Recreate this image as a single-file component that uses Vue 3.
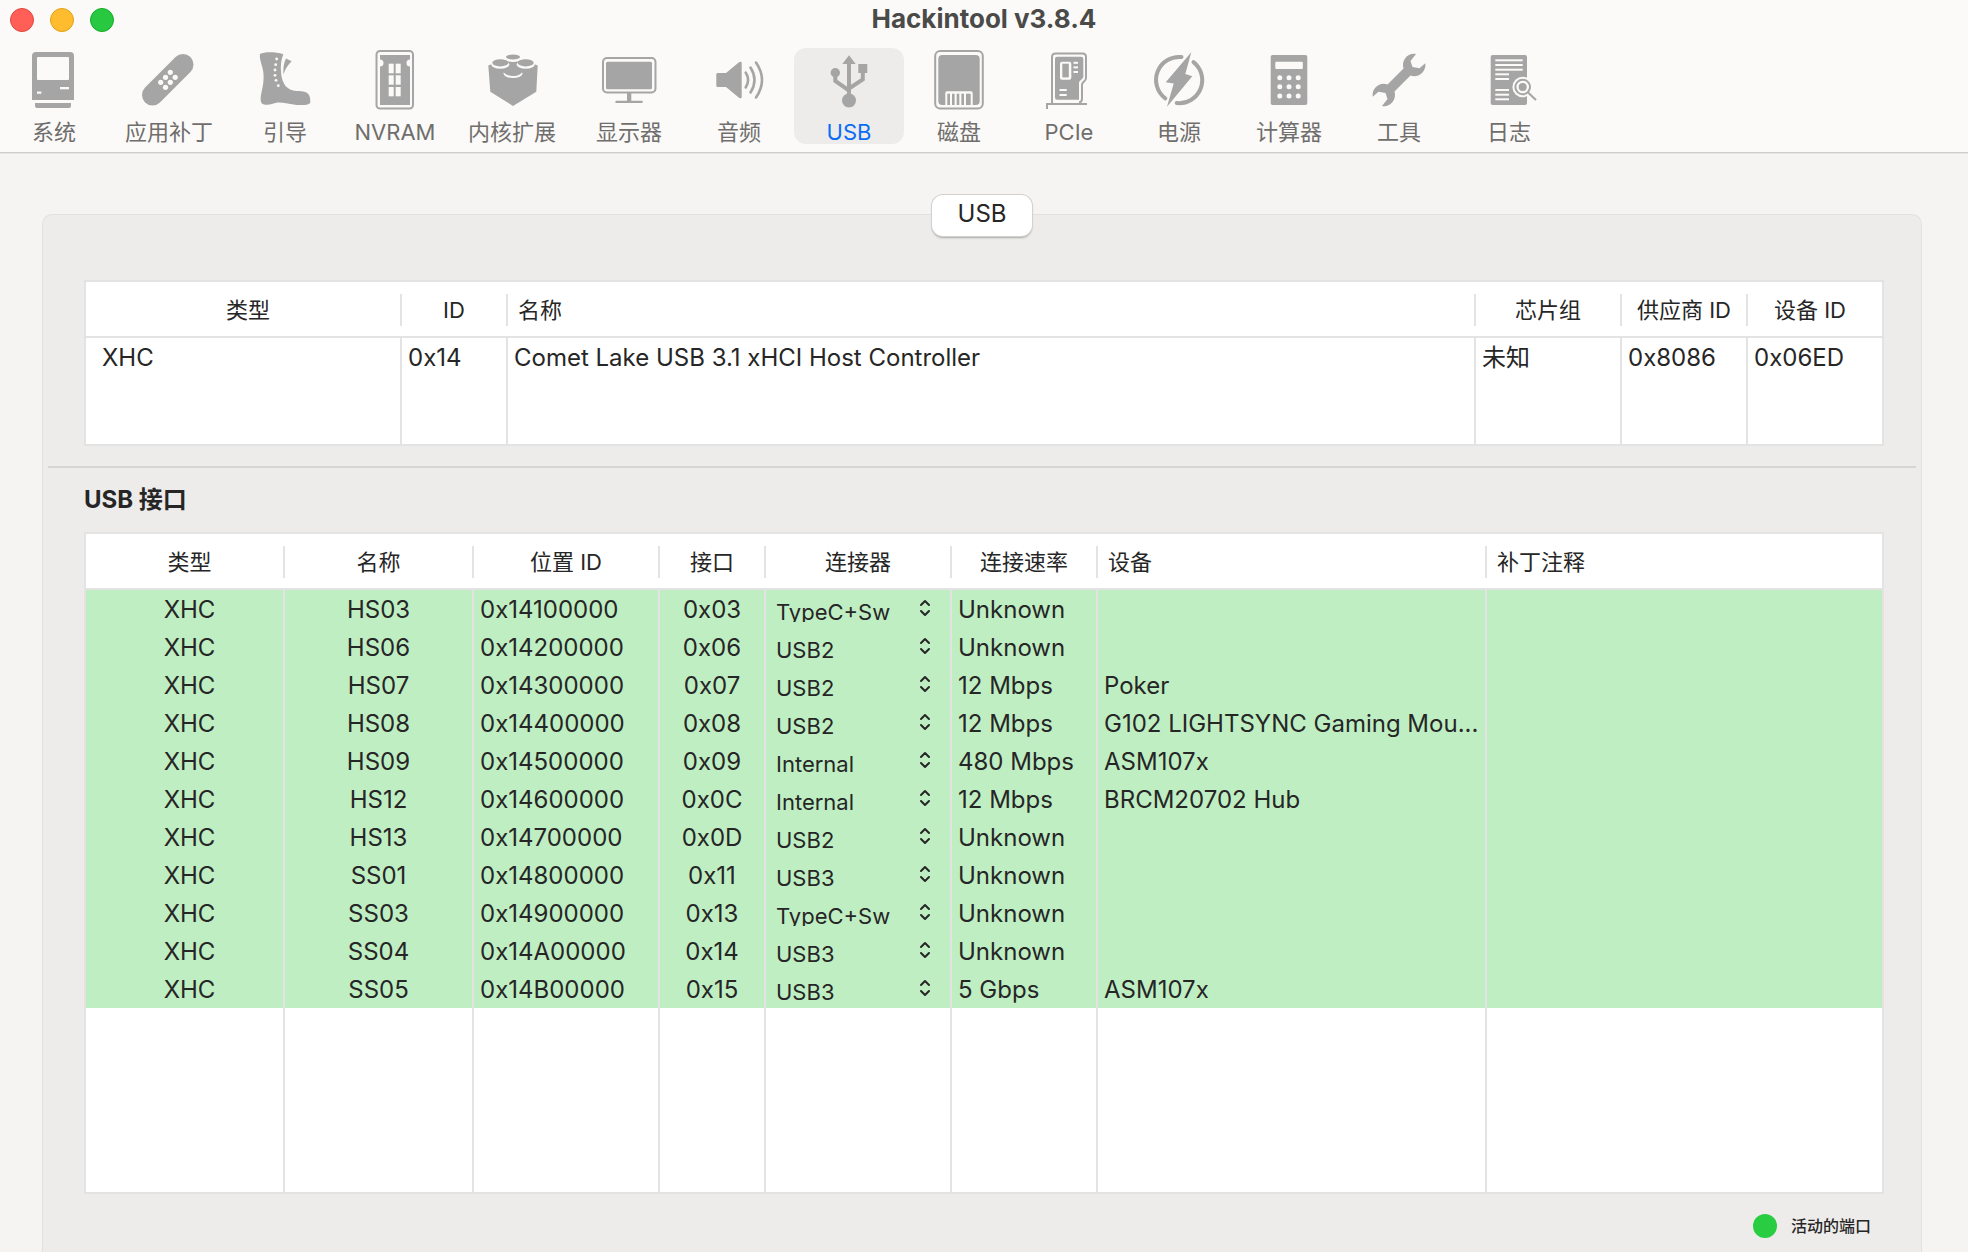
<script setup>
import { reactive, ref } from 'vue'

const active = ref('USB')

const tools = [
  {
    label: '系统',
    icon: `<path d="M12 2h34a4 4 0 0 1 4 4v44H8V6a4 4 0 0 1 4-4z"/><path d="M11 53h36v3a2 2 0 0 1-2 2H13a2 2 0 0 1-2-2z"/><rect class="cut" x="13" y="7" width="32" height="23" rx="1"/><rect class="cut" x="36" y="37" width="9" height="2.3"/><rect class="cut" x="13" y="41.5" width="4.3" height="2.3"/>`
  },
  {
    label: '应用补丁',
    icon: `<path class="line" d="M13.5 45 44 14.5" stroke-width="21" stroke-linecap="round"/><g class="cut"><circle cx="31.3" cy="22.3" r="2.6"/><circle cx="26.5" cy="27.3" r="2.6"/><circle cx="36.2" cy="27.3" r="2.6"/><circle cx="21.7" cy="32.3" r="2.6"/><circle cx="31.3" cy="32.3" r="2.6"/><circle cx="26.5" cy="37.3" r="2.6"/></g>`
  },
  {
    label: '引导',
    icon: `<path d="M5 4C9 2 20 1.500 28.300 4.300C26 10 25.500 16 26 21.700C26.500 29 28.500 35 33.300 38.300C38 42 46 40.500 50 42C54 43.500 55.500 46 55.300 52.700C53 55.500 46 55 41.700 55C35 54.500 27 52 21.700 52.700C18 53.500 14 55.500 9 54.500C5.500 54 5 50 6.300 43.300C8 36 9 30 8.500 24C8 16 4 10 5 4z"/><path d="M31 8.500 36.700 11.300C33 15 30 19 28.500 24.500C28 19 28.500 13 31 8.500z"/><g class="cut"><circle cx="21.700" cy="9" r="1.400"/><circle cx="20.700" cy="14.700" r="1.400"/><circle cx="20" cy="20" r="1.400"/><circle cx="20" cy="25.300" r="1.400"/><circle cx="21" cy="30.300" r="1.400"/><circle cx="23.300" cy="35.700" r="1.400"/></g>`
  },
  {
    label: 'NVRAM',
    icon: `<rect class="line" x="11.500" y="1" width="36.500" height="57.500" rx="3.500" stroke-width="2"/><path d="M15 5H45V9.500A3.500 3.500 0 0 0 45 16.500V55H15V16.500A3.500 3.500 0 0 0 15 9.500z"/><g class="cut"><rect x="23.700" y="13.700" width="5" height="9.600"/><rect x="30.700" y="13.700" width="5" height="9.600"/><rect x="23.700" y="25.300" width="5" height="9.400"/><rect x="30.700" y="25.300" width="5" height="9.400"/><rect x="23.700" y="37" width="5" height="9.300"/><rect x="30.700" y="37" width="5" height="9.300"/></g>`
  },
  {
    label: '内核扩展',
    icon: `<path d="M6.300 15.500 14 12.500 31 8 48 12.500 55.700 15.500 54.300 41.700 31 56 8.300 41.700z"/><g class="cut"><ellipse cx="31" cy="8.500" rx="8.500" ry="3.400"/><ellipse cx="18.300" cy="14.500" rx="9" ry="4.300"/><ellipse cx="43.700" cy="14.500" rx="9" ry="4.300"/><ellipse cx="31" cy="23.500" rx="9.500" ry="4.500"/></g><ellipse cx="31" cy="7" rx="7" ry="2.500"/><ellipse cx="18.300" cy="12.800" rx="8" ry="3.600"/><ellipse cx="43.700" cy="12.800" rx="8" ry="3.600"/><path d="M21 19h20v1.500C40 24 36 26 31 26s-9-2-10-5.500z"/>`
  },
  {
    label: '显示器',
    icon: `<rect class="line" x="4" y="8" width="52.500" height="34.500" rx="4" stroke-width="2"/><rect x="7" y="11.700" width="46" height="27.600" rx="1.500"/><rect x="28" y="43" width="4.300" height="8"/><rect x="16.300" y="50.700" width="27.500" height="2.300" rx="1"/>`
  },
  {
    label: '音频',
    icon: `<path d="M8.500 23H17L30 12.300Q32.700 11 32.700 13V47Q32.700 49 30 47.700L17 37H8.500Q7.300 37 7.300 35.500V24.500Q7.300 23 8.500 23z"/><g class="line" stroke-width="2.600" stroke-linecap="round"><path d="M36.700 22.500Q41.500 30 36.700 37.500"/><path d="M41.500 17.500Q49.500 30 41.500 42.500"/><path d="M47 12.500Q59 30 47 47.500"/></g>`
  },
  {
    label: 'USB',
    icon: `<path d="M30 5.300 36.700 14H23.300z"/><circle cx="30" cy="50.500" r="7"/><circle cx="16.300" cy="22.700" r="4.700"/><rect x="39.300" y="14" width="9" height="9"/><g class="line" stroke-width="4"><path d="M30 12V46"/><path d="M16.300 23V31L30 40.500"/><path d="M43.800 22V29.500L30 38.500"/></g>`
  },
  {
    label: '磁盘',
    icon: `<rect class="line" x="6.200" y="1" width="47.600" height="57.500" rx="5" stroke-width="2"/><rect x="9.300" y="5" width="41.400" height="50" rx="4"/><path class="cut" d="M16.300 55V43Q16.300 41.300 18 41.300H42Q43.700 41.300 43.700 43V55z"/><rect x="18.300" y="43.700" width="2.700" height="11.300"/><rect x="23" y="43.700" width="2.600" height="11.300"/><rect x="27.700" y="43.700" width="2.600" height="11.300"/><rect x="32.400" y="43.700" width="2.600" height="11.300"/><rect x="37" y="43.700" width="4.700" height="11.300"/>`
  },
  {
    label: 'PCIe',
    icon: `<path class="line" stroke-width="2" d="M13 53V7Q13 3.500 16.500 3.500H43.500Q47 3.500 47 7V28Q47 30 45 31.500L44 32.500Q43 33.300 43 35V49Q43 52 40 52.500"/><path d="M18 6.700H42Q44.300 6.700 44.300 9V27.500L42 30Q40 31 40 33V49.700H18Q16 49.700 16 47.500V9Q16 6.700 18 6.700z"/><rect class="cut" x="21" y="11.700" width="11.300" height="18" rx="2"/><rect x="23.300" y="13.700" width="6.500" height="13.700"/><g class="cut"><rect x="34.500" y="11.800" width="4.500" height="2"/><rect x="34.500" y="16.400" width="4.500" height="2"/><rect x="34.500" y="21" width="4.500" height="2"/><rect x="20.500" y="39" width="7.200" height="2"/><rect x="20.500" y="44" width="7.200" height="2"/></g><path class="line" stroke-width="2" d="M48 54H8V59"/>`
  },
  {
    label: '电源',
    icon: `<g class="line" stroke-width="4" stroke-linecap="round"><path d="M32.500 7.100A23 23 0 0 0 16.300 48.400"/><path d="M44.500 12.100A23 23 0 0 1 27.700 53"/></g><path d="M42.300 2.300 36.300 24 43.300 26.300 18 56.700 24.700 33.500 16.700 32.300z"/>`
  },
  {
    label: '计算器',
    icon: `<rect x="11.700" y="5" width="36.600" height="50" rx="2"/><g class="cut"><rect x="16.300" y="11.700" width="27.500" height="7.300" rx="1"/><circle cx="20.800" cy="27.700" r="2.500"/><circle cx="30" cy="27.700" r="2.500"/><circle cx="39.200" cy="27.700" r="2.500"/><circle cx="20.800" cy="36.800" r="2.500"/><circle cx="30" cy="36.800" r="2.500"/><circle cx="39.200" cy="36.800" r="2.500"/><circle cx="20.800" cy="46" r="2.500"/><circle cx="30" cy="46" r="2.500"/><circle cx="39.200" cy="46" r="2.500"/></g>`
  },
  {
    label: '工具',
    icon: `<path d="M47 4C39 2.500 32 10 34.500 18.500L18.500 34.500C11 31.500 2.500 38 3.700 46.700L9.500 41.700 16.500 43 18.500 49 13 56C21 57.500 28 50 25.500 41.500L41.500 25.500C49 28.500 57.500 22 56.300 13.300L50.500 18.300 43.500 17 41.500 11z"/>`
  },
  {
    label: '日志',
    icon: `<rect x="11.700" y="5" width="36.300" height="50" rx="2"/><g class="cut"><rect x="16.300" y="9.300" width="27.400" height="2"/><rect x="16.300" y="14" width="27.400" height="2"/><rect x="16.300" y="18.700" width="27.400" height="2"/><rect x="16.300" y="23.300" width="13.700" height="2"/><rect x="16.300" y="28" width="13.700" height="2"/><rect x="16.300" y="39" width="13.700" height="2"/><rect x="16.300" y="43.700" width="13.700" height="2"/><rect x="16.300" y="48.300" width="13.700" height="2"/><circle cx="43.700" cy="37" r="10.300"/></g><path class="gap" d="M48 41 56.500 49.500"/><g class="line" stroke-width="2"><circle cx="43.700" cy="37" r="7.300"/><path d="M48.800 42.200 57 50"/></g><circle cx="43.700" cy="37" r="4"/>`
  }
]

const connectors = ['USB2', 'USB3', 'TypeC+Sw', 'TypeC', 'Internal']

const ports = reactive([
  { name: 'HS03', location: '0x14100000', port: '0x03', connector: 'TypeC+Sw', speed: 'Unknown', device: '' },
  { name: 'HS06', location: '0x14200000', port: '0x06', connector: 'USB2', speed: 'Unknown', device: '' },
  { name: 'HS07', location: '0x14300000', port: '0x07', connector: 'USB2', speed: '12 Mbps', device: 'Poker' },
  { name: 'HS08', location: '0x14400000', port: '0x08', connector: 'USB2', speed: '12 Mbps', device: 'G102 LIGHTSYNC Gaming Mou...' },
  { name: 'HS09', location: '0x14500000', port: '0x09', connector: 'Internal', speed: '480 Mbps', device: 'ASM107x' },
  { name: 'HS12', location: '0x14600000', port: '0x0C', connector: 'Internal', speed: '12 Mbps', device: 'BRCM20702 Hub' },
  { name: 'HS13', location: '0x14700000', port: '0x0D', connector: 'USB2', speed: 'Unknown', device: '' },
  { name: 'SS01', location: '0x14800000', port: '0x11', connector: 'USB3', speed: 'Unknown', device: '' },
  { name: 'SS03', location: '0x14900000', port: '0x13', connector: 'TypeC+Sw', speed: 'Unknown', device: '' },
  { name: 'SS04', location: '0x14A00000', port: '0x14', connector: 'USB3', speed: 'Unknown', device: '' },
  { name: 'SS05', location: '0x14B00000', port: '0x15', connector: 'USB3', speed: '5 Gbps', device: 'ASM107x' }
])
</script>

<template>
  <div class="window">
    <header class="chrome">
      <div class="titlebar">
        <div class="lights">
          <button class="light close" aria-label="关闭"></button>
          <button class="light minimize" aria-label="最小化"></button>
          <button class="light zoom" aria-label="缩放"></button>
        </div>
        <h1>Hackintool v3.8.4</h1>
      </div>
      <nav class="toolbar">
        <button
          v-for="tool in tools"
          :key="tool.label"
          class="tool"
          :class="{ active: tool.label === active }"
          @click="active = tool.label"
        >
          <svg viewBox="0 0 60 60" aria-hidden="true" v-html="tool.icon"></svg>
          <span>{{ tool.label }}</span>
        </button>
      </nav>
    </header>

    <main class="content">
      <button class="tab">USB</button>
      <section class="panel">
        <table class="grid controllers">
          <colgroup>
            <col class="c-type" /><col class="c-id" /><col /><col class="c-chip" /><col class="c-vendor" /><col class="c-dev" />
          </colgroup>
          <thead>
            <tr>
              <th>类型</th><th>ID</th><th class="start">名称</th><th>芯片组</th><th>供应商 ID</th><th>设备 ID</th>
            </tr>
          </thead>
          <tbody>
            <tr>
              <td>XHC</td><td>0x14</td><td>Comet Lake USB 3.1 xHCI Host Controller</td><td>未知</td><td>0x8086</td><td>0x06ED</td>
            </tr>
            <tr class="filler"><td v-for="n in 6" :key="n"></td></tr>
          </tbody>
        </table>

        <hr />

        <h2>USB 接口</h2>

        <table class="grid ports">
          <colgroup>
            <col class="p-type" /><col class="p-name" /><col class="p-loc" /><col class="p-port" /><col class="p-conn" /><col class="p-speed" /><col class="p-device" /><col />
          </colgroup>
          <thead>
            <tr>
              <th>类型</th><th>名称</th><th>位置 ID</th><th>接口</th><th>连接器</th><th>连接速率</th><th class="start">设备</th><th class="start">补丁注释</th>
            </tr>
          </thead>
          <tbody>
            <tr v-for="p in ports" :key="p.name" class="live">
              <td class="center">XHC</td>
              <td class="center">{{ p.name }}</td>
              <td>{{ p.location }}</td>
              <td class="center">{{ p.port }}</td>
              <td class="popup-cell">
                <div class="popup">
                  <select v-model="p.connector" :aria-label="p.name + ' 连接器'">
                    <option v-for="c in connectors" :key="c">{{ c }}</option>
                  </select>
                  <svg viewBox="0 0 12 18" aria-hidden="true"><path d="M2 6 6 2 10 6M2 12 6 16 10 12" /></svg>
                </div>
              </td>
              <td>{{ p.speed }}</td>
              <td>{{ p.device }}</td>
              <td></td>
            </tr>
            <tr class="filler"><td v-for="n in 8" :key="n"></td></tr>
          </tbody>
        </table>

        <footer class="legend"><i class="dot"></i><span>活动的端口</span></footer>
      </section>
    </main>
  </div>
</template>

<style>
body {
  margin: 0;
}
</style>

<style scoped>
.window {
  display: flex;
  flex-direction: column;
  min-height: 100vh;
  background: #f5f4f2;
  color: #262626;
  font-family: Inter, "Noto Sans CJK SC", sans-serif;
  font-size: 24px;
}
button,
select {
  margin: 0;
  padding: 0;
  border: 0;
  background: none;
  color: inherit;
  font: inherit;
}
.chrome {
  padding-bottom: 8px;
  background: #fbfaf8;
  border-bottom: 1px solid #cdcccb;
  box-shadow: 0 1px #e6e5e3;
}
.titlebar {
  display: grid;
  grid-template-columns: 1fr auto 1fr;
  height: 48px;
}
.lights {
  display: flex;
  gap: 16px;
  padding: 8px 10px;
}
.light {
  width: 24px;
  height: 24px;
  border-radius: 50%;
}
.close {
  background: #ff5f57;
  border: 1px solid #e2463f;
}
.minimize {
  background: #febc2e;
  border: 1px solid #e1a116;
}
.zoom {
  background: #28c840;
  border: 1px solid #12ac28;
}
h1 {
  margin: 0;
  font-size: 26px;
  font-weight: 700;
  line-height: 38px;
  color: #4a4a49;
}
.toolbar {
  display: grid;
  grid-template-columns: 108px 122px 110px 110px 124px repeat(9, 110px);
}
.tool {
  display: flex;
  flex-direction: column;
  align-items: center;
  gap: 10px;
  height: 96px;
  padding-top: 2px;
  border-radius: 12px;
  color: #6f6e6d;
  font-size: 22px;
  line-height: 24px;
  white-space: nowrap;
  --face: #fbfaf8;
}
.tool.active {
  --face: #edecea;
  background: #edecea;
  color: #0a6cf5;
}
.tool svg {
  flex: none;
  width: 60px;
  height: 60px;
  fill: #a5a5a5;
}
.tool :deep(.cut) {
  fill: var(--face);
}
.tool :deep(.line) {
  fill: none;
  stroke: #a5a5a5;
}
.tool :deep(.gap) {
  fill: none;
  stroke: var(--face);
  stroke-width: 5px;
}
.content {
  display: flex;
  flex: 1;
  flex-direction: column;
  padding: 42px 46px 0 42px;
}
.tab {
  z-index: 1;
  align-self: center;
  width: 100px;
  height: 41px;
  margin-bottom: -22px;
  padding-bottom: 4px;
  border-radius: 11px;
  background: #fff;
  box-shadow: 0 0 0 1px #d2d1d0, 0 2px 2px #a9a9a8;
}
.panel {
  flex: 1;
  padding: 65px 37px 14px 41px;
  border: 1px solid #e2e1df;
  border-bottom: 0;
  border-radius: 10px 10px 0 0;
  background: #edecea;
}
.grid {
  width: 100%;
  table-layout: fixed;
  border: 2px solid #e3e3e3;
  border-spacing: 0;
  background: #fff;
}
.grid th {
  box-sizing: border-box;
  height: 56px;
  padding: 2px 0 0;
  border-bottom: 2px solid #e3e3e3;
  font-size: 22px;
  font-weight: 400;
  line-height: 32px;
  text-align: center;
}
.grid th + th {
  padding-left: 2px;
  background: linear-gradient(#e3e3e3, #e3e3e3) 0 12px / 2px 32px no-repeat;
}
.grid th:first-child {
  padding-left: 10px;
}
.grid th:last-child {
  padding-right: 10px;
}
.grid th.start {
  padding-left: 12px;
  text-align: left;
}
.grid td {
  box-sizing: border-box;
  height: 38px;
  padding: 2px 6px 0;
  line-height: 36px;
  white-space: nowrap;
}
.grid td + td {
  border-left: 2px solid #e3e3e3;
}
.grid td:first-child {
  padding-left: 16px;
}
.grid td.center {
  padding: 2px 0 0;
  text-align: center;
}
.grid td.center:first-child {
  padding-left: 10px;
}
.controllers .filler td {
  height: 68px;
}
.ports .filler td {
  height: 184px;
}
.live {
  background: #c0eec3;
}
.c-type { width: 314px; }
.c-id { width: 106px; }
.c-chip { width: 146px; }
.c-vendor { width: 126px; }
.c-dev { width: 136px; }
.p-type { width: 197px; }
.p-name { width: 189px; }
.p-loc { width: 186px; }
.p-port { width: 106px; }
.p-conn { width: 186px; }
.p-speed { width: 146px; }
.p-device { width: 389px; }
.grid td.popup-cell {
  padding: 0;
  vertical-align: top;
}
.popup {
  position: relative;
  height: 32px;
  overflow: hidden;
}
.popup select {
  display: block;
  width: 100%;
  height: 44px;
  padding: 0 40px 0 10px;
  appearance: none;
  outline: 0;
  font-size: 22px;
}
.popup svg {
  position: absolute;
  top: 9px;
  right: 19px;
  width: 12px;
  height: 18px;
  fill: none;
  stroke: #262626;
  stroke-width: 2px;
  stroke-linecap: round;
  stroke-linejoin: round;
  pointer-events: none;
}
hr {
  height: 2px;
  margin: 20px -32px 0 -36px;
  border: 0;
  background: #d6d5d3;
}
h2 {
  margin: 16px 0;
  font-size: 24px;
  font-weight: 700;
  line-height: 32px;
}
.legend {
  display: flex;
  align-items: center;
  justify-content: flex-end;
  gap: 14px;
  margin-top: 20px;
  padding-right: 13px;
  font-size: 16px;
  font-weight: 500;
  line-height: 24px;
}
.dot {
  width: 24px;
  height: 24px;
  border-radius: 50%;
  background: #28cd41;
}
</style>
